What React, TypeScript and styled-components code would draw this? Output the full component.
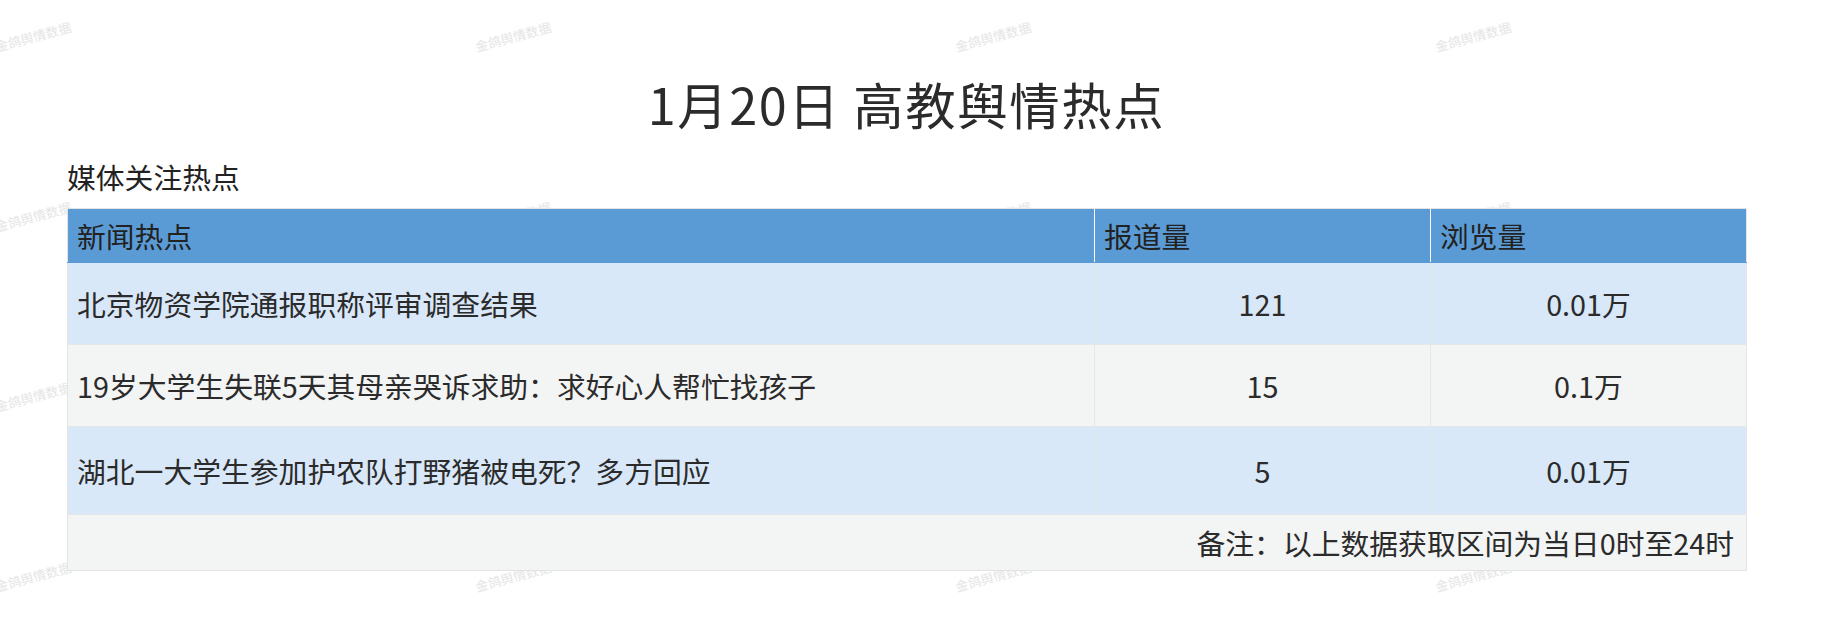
import React from "react";
import styled, { createGlobalStyle } from "styled-components";

const GlobalStyle = createGlobalStyle`
  html, body {
    margin: 0;
    padding: 0;
    background: #ffffff;
  }
  body {
    font-family: "Noto Sans CJK SC", "Noto Sans", sans-serif;
    color: #2b2b2b;
  }
`;

const Page = styled.div`
  position: relative;
  width: 1837px;
  height: 621px;
  overflow: hidden;
  background: #ffffff;
`;

const WatermarkLayer = styled.div`
  position: absolute;
  left: -207px;
  top: -54px;
  display: grid;
  grid-template-columns: repeat(4, 480px);
  grid-auto-rows: 180px;
  pointer-events: none;
  z-index: 0;
`;

const Mark = styled.span`
  display: flex;
  align-items: center;
  justify-content: center;
  font-size: 13px;
  color: #e5e5e5;
  transform: rotate(-15deg);
  white-space: nowrap;
`;

const Content = styled.div`
  position: relative;
  z-index: 1;
  width: 1679px;
  margin-left: 67px;
  padding-top: 69px;
`;

const Title = styled.h1`
  margin: 0;
  font-size: 50.4px;
  line-height: 70px;
  letter-spacing: 1.6px;
  font-weight: normal;
  text-align: center;
  color: #2b2b2b;
`;

const Subtitle = styled.div`
  margin-top: 18px;
  font-size: 28.8px;
  line-height: 40px;
  color: #222;
`;

const Table = styled.table`
  margin-top: 11px;
  width: 1679px;
  border-collapse: collapse;
  table-layout: fixed;
  border: 1px solid #e1e3e5;
  font-size: 28.8px;
  color: #2b2b2b;
`;

const HeadCell = styled.th`
  height: 53px;
  padding: 0 9px;
  background: #5b9bd5;
  color: #222;
  font-weight: normal;
  text-align: left;
  border-right: 1px solid #ffffff;
  border-bottom: 1px solid #5b9bd5;
  &:last-child {
    border-right: 1px solid #e1e3e5;
  }
`;

const Row = styled.tr<{ $alt: boolean }>`
  background: ${(p) => (p.$alt ? "#f3f4f4" : "#d9e8f9")};
`;

const Cell = styled.td<{ $center?: boolean; $h: number }>`
  height: ${(p) => p.$h}px;
  padding: 0 9px;
  text-align: ${(p) => (p.$center ? "center" : "left")};
  vertical-align: middle;
  border: 1px solid #e4e6e8;
  white-space: nowrap;
`;

const NoteCell = styled.td`
  height: 55px;
  padding: 0 12px;
  text-align: right;
  background: #f3f4f4;
  border: 1px solid #e1e3e5;
`;

const rows = [
  { title: "北京物资学院通报职称评审调查结果", count: "121", views: "0.01万", h: 81 },
  { title: "19岁大学生失联5天其母亲哭诉求助：求好心人帮忙找孩子", count: "15", views: "0.1万", h: 81 },
  { title: "湖北一大学生参加护农队打野猪被电死？多方回应", count: "5", views: "0.01万", h: 87 },
];

export default function App() {
  const marks = Array.from({ length: 16 });
  return (
    <>
      <GlobalStyle />
      <Page>
        <WatermarkLayer>
          {marks.map((_, i) => (
            <Mark key={i}>金鸽舆情数据</Mark>
          ))}
        </WatermarkLayer>
        <Content>
          <Title>1月20日 高教舆情热点</Title>
          <Subtitle>媒体关注热点</Subtitle>
          <Table>
            <colgroup>
              <col style={{ width: 1027 }} />
              <col style={{ width: 336 }} />
              <col style={{ width: 316 }} />
            </colgroup>
            <thead>
              <tr>
                <HeadCell>新闻热点</HeadCell>
                <HeadCell>报道量</HeadCell>
                <HeadCell>浏览量</HeadCell>
              </tr>
            </thead>
            <tbody>
              {rows.map((r, i) => (
                <Row key={r.title} $alt={i % 2 === 1}>
                  <Cell $h={r.h}>{r.title}</Cell>
                  <Cell $h={r.h} $center>
                    {r.count}
                  </Cell>
                  <Cell $h={r.h} $center>
                    {r.views}
                  </Cell>
                </Row>
              ))}
              <tr>
                <NoteCell colSpan={3}>备注：以上数据获取区间为当日0时至24时</NoteCell>
              </tr>
            </tbody>
          </Table>
        </Content>
      </Page>
    </>
  );
}
